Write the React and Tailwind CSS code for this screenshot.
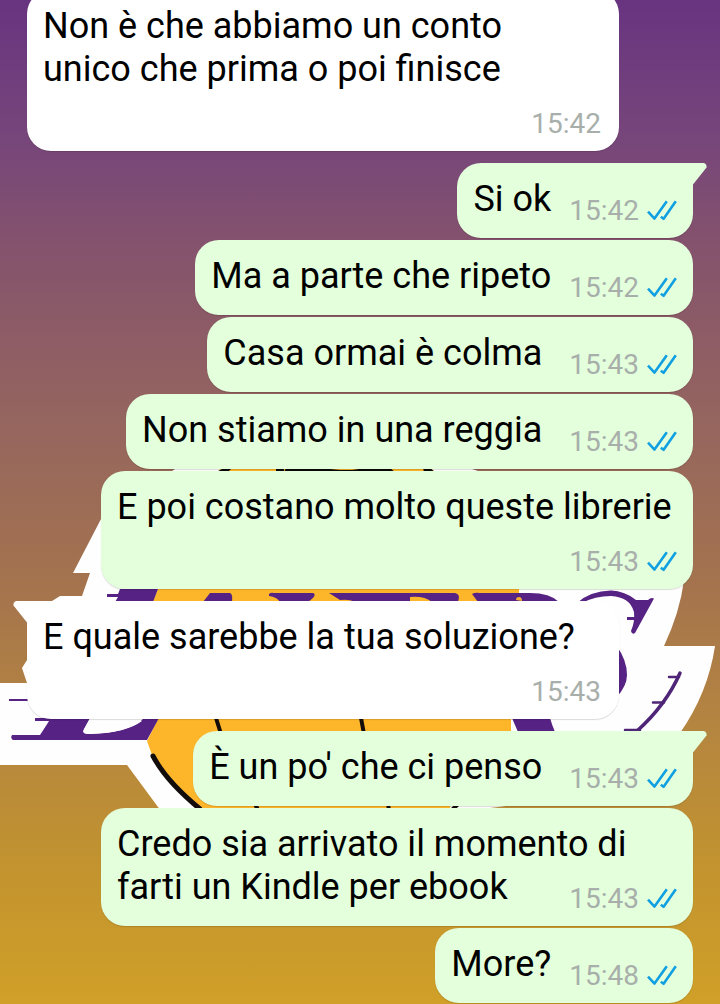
const groups = [
  {
    from: "them",
    tail: false,
    messages: [
      { lines: ["Non è che abbiamo un conto", "unico che prima o poi finisce"], time: "15:42", timeBelow: true },
    ],
  },
  {
    from: "me",
    tail: true,
    messages: [
      { lines: ["Si ok"], time: "15:42" },
      { lines: ["Ma a parte che ripeto"], time: "15:42" },
      { lines: ["Casa ormai è colma\u00a0"], time: "15:43" },
      { lines: ["Non stiamo in una reggia\u00a0"], time: "15:43" },
      { lines: ["E poi costano molto queste librerie"], time: "15:43", timeBelow: true },
    ],
  },
  {
    from: "them",
    tail: true,
    messages: [{ lines: ["E quale sarebbe la tua soluzione?"], time: "15:43", timeBelow: true }],
  },
  {
    from: "me",
    tail: true,
    messages: [
      { lines: ["È un po' che ci penso\u00a0"], time: "15:43" },
      { lines: ["Credo sia arrivato il momento di", "farti un Kindle per ebook"], time: "15:43" },
      { lines: ["More?"], time: "15:48" },
    ],
  },
];

function ReadTicks() {
  return (
    <svg
      role="img"
      aria-label="Letto"
      className="h-[22px] w-[30px]"
      viewBox="0 0 30 22"
      fill="none"
      stroke="#109fe0"
      strokeWidth="2.6"
      strokeLinejoin="round"
    >
      <path d="M1 11.600 7.500 18.600 19.800 1.300" />
      <path d="M13.800 16.800 16.600 18.800 28.800 1.300" />
    </svg>
  );
}

function Tail({ mine }) {
  return mine ? (
    <svg aria-hidden="true" className="absolute top-0 -right-[14px] h-[22px] w-[15px]" viewBox="0 0 15 22">
      <path d="M0 0H11.500Q15 .6 14.500 4.500L1 21.500H0Z" fill="#e4ffdc" />
    </svg>
  ) : (
    <svg aria-hidden="true" className="absolute top-0 -left-[14px] h-[22px] w-[15px]" viewBox="0 0 15 22">
      <path d="M15 0H3.500Q0 .6 .5 4.500L14 21.500H15Z" fill="#fff" />
    </svg>
  );
}

function Message({ lines, time, timeBelow, mine, tail }) {
  const side = mine
    ? "self-end bg-[#e4ffdc] pr-4 pl-4"
    : "self-start bg-white pr-[18px] pl-4";
  const corner = tail ? (mine ? "rounded-tr-none" : "rounded-tl-none") : "";
  return (
    <li
      className={`relative flow-root max-w-[592px] rounded-3xl pt-[15px] pb-3 shadow-[0_1px_1px_rgba(0,0,0,0.14)] ${
        timeBelow || lines.length > 1 ? "w-full" : ""
      } ${side} ${corner}`}
    >
      {tail && <Tail mine={mine} />}
      <span className={timeBelow ? "block" : ""}>
        {lines.map((line, i) => (
          <span key={line}>
            {i > 0 && <br />}
            {line}
          </span>
        ))}
      </span>
      <span className="float-right mt-[17px] ml-[18px] flex items-center gap-2 text-[28px] leading-[31px] text-[#a8afab]">
        <time>{time}</time>
        {mine && <ReadTicks />}
      </span>
    </li>
  );
}

function Wallpaper() {
  return (
    <svg
      aria-hidden="true"
      className="absolute inset-0 h-full w-full"
      viewBox="0 0 720 1004"
      preserveAspectRatio="xMidYMid slice"
    >
      <path
        fill="#fffefe"
        d="M175 469H472L684 540V580Q680 612 664 646H715Q708 693 680 733L640 790 490 808V830H175L127 765H0V683H27L22 668 27 660 52 601 60 596H82L90 573H73L101 519Z"
      />
      <path fill="#fdb62a" d="M220 469H432L519 560V601L511 719V731L450 807V820H205L152 755 147 741 158 719 153 601 158 589Z" />
      <path fill="#0b0907" d="M218 471 224 468H232L228 472ZM276 468H284V472H276ZM286 468H320L340 470H352L366 468H390L395 472H284ZM423 468H430L435 472H424Z" />
      <g fill="none" stroke="#120c0a" strokeWidth="4" strokeLinecap="round">
        <path d="M153 756Q166 781 200 809" strokeWidth="5" />
        <path d="M216 718 221 734M361 718 364 734M255 804 258 810M388 804 389 810M450 812 458 804" />
      </g>
      <g fill="#562283">
        <path d="M120 589H158L153 602H115L118 597H107V594H118Z" />
        <path d="M203 602 210 593H230Q233 594 232 602Z" />
        <path d="M269 594Q271 592 274 593H313Q318 595 308 602H280Q277 597 269 596Z" />
        <path d="M329 593H455Q461 594 458 602H432Q425 596 410 597V602H354Q350 599 340 600Z" />
        <path d="M472 594Q475 592 480 593H530Q550 593 559 602H478Z" />
        <path d="M577 603Q590 591 611 590.500 625 591 636 600H648Q651 597 654 598.500L635 633Q632 635 631 631 635 622 634 612 630 597 611 596 595 596 582 603Z" />
        <path d="M627 617H636V620H627ZM616 645Q627 660 627 675 627 686 616 698Z" />
        <path d="M512 718H550Q552 725 555 732H518Z" />
        <path d="M9 699H28V701H9ZM35 718H90L84 729Q82 734 90 734 130 733 144 718H159L147 740H13Q10 738 12 735H40Q46 726 49 721H35Z" />
      </g>
      <path fill="#f3ad35" d="M516 600Q516 597 519 597 522 597 522 601Z" />
      <path fill="#fffefe" d="M83 731 90 719H137L142 721Q126 733 88 734 83 734 83 731Z" />
      <g fill="none" stroke="#4f2677" strokeWidth="2.500" strokeLinecap="round">
        <path d="M680 673Q666 705 637 731" strokeWidth="3.500" />
        <path d="M669 677H679M653 702.500H664M625 730H640" />
      </g>
    </svg>
  );
}

export default function App() {
  return (
    <main
      lang="it"
      className="relative min-h-screen overflow-hidden bg-[linear-gradient(#683480_0%,#77467a_14%,#84526d_24%,#96665e_43%,#a4734e_58%,#b5863f_73%,#c2932f_86%,#d0a028_100%)] font-[Roboto,sans-serif]"
    >
      <Wallpaper />
      <div className="relative -mt-[10px] flex flex-col gap-3 px-[27px] pb-px text-[36px] leading-[43px] text-black">
        {groups.map((group, g) => (
          <ul key={g} className="flex flex-col gap-[2px]">
            {group.messages.map((message, i) => (
              <Message
                key={message.lines[0]}
                {...message}
                mine={group.from === "me"}
                tail={group.tail && i === 0}
              />
            ))}
          </ul>
        ))}
      </div>
    </main>
  );
}
